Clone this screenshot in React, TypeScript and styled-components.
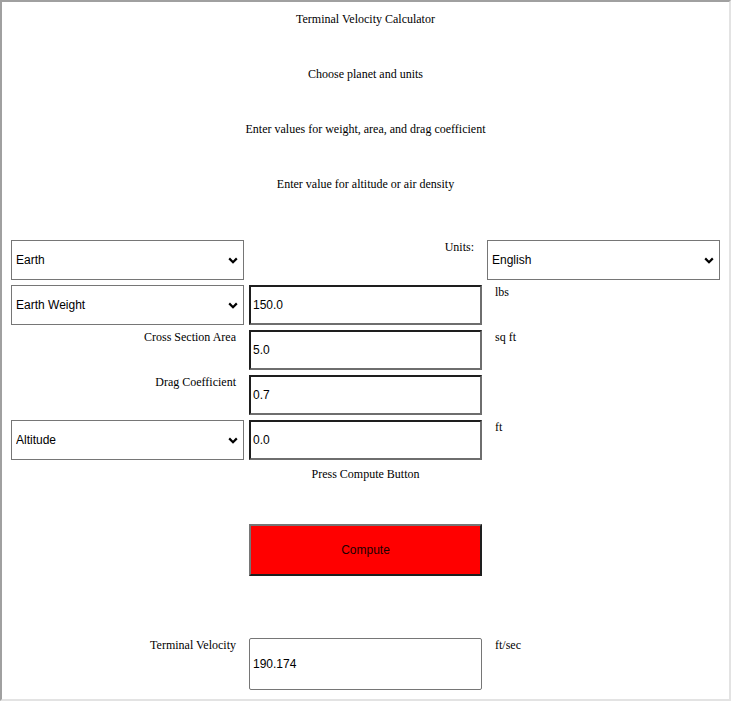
import React from "react";
import styled, { createGlobalStyle } from "styled-components";

const Global = createGlobalStyle`
  html, body { margin: 0; padding: 0; background: #fff; }
  body {
    font-family: "Liberation Serif", "Times New Roman", serif;
    font-size: 12px;
    color: #000;
  }
`;

const Frame = styled.div`
  width: 731px;
  height: 701px;
  box-sizing: border-box;
  border-style: solid;
  border-width: 2px;
  border-color: #a0a0a0 #e3e3e3 #e3e3e3 #a0a0a0;
  padding: 10px 9px 0;
`;

const Intro = styled.div`
  display: flex;
  flex-direction: column;
  margin-bottom: 8px;
`;

const IntroLine = styled.p`
  margin: 0;
  height: 55px;
  line-height: 14px;
  text-align: center;
`;

const Form = styled.div`
  display: grid;
  grid-template-columns: repeat(3, 233px);
  grid-template-rows: repeat(5, 40px) 54px 52px 52px 52px;
  column-gap: 5px;
  row-gap: 5px;
`;

const Label = styled.div<{ $align?: "left" | "right" | "center"; $top?: number }>`
  line-height: 14px;
  padding: ${(p) => p.$top ?? 0}px 8px 0;
  text-align: ${(p) => p.$align ?? "left"};
`;

const Empty = styled.div<{ $span?: number }>`
  grid-column: span ${(p) => p.$span ?? 1};
`;

const SelectWrap = styled.div`
  position: relative;
  height: 40px;
`;

const Select = styled.select`
  appearance: none;
  -webkit-appearance: none;
  width: 100%;
  height: 40px;
  box-sizing: border-box;
  border: 1px solid #767676;
  border-radius: 0;
  background: #fff;
  padding: 0 24px 0 4px;
  font-family: "Liberation Sans", Arial, sans-serif;
  font-size: 12px;
  color: #000;
  outline: none;
`;

const Chevron = styled.svg`
  position: absolute;
  right: 6px;
  top: 50%;
  margin-top: -3px;
  pointer-events: none;
`;

const Field = styled.input`
  width: 100%;
  height: 40px;
  box-sizing: border-box;
  border-style: solid;
  border-width: 2px;
  border-color: #1e1e1e #6e6e6e #6e6e6e #1e1e1e;
  border-radius: 0;
  padding: 0 2px;
  margin: 0;
  font-family: "Liberation Sans", Arial, sans-serif;
  font-size: 12px;
  color: #000;
  background: #fff;
  outline: none;
`;

const Output = styled.input`
  width: 100%;
  height: 52px;
  box-sizing: border-box;
  border: 1px solid #767676;
  border-radius: 2px;
  padding: 0 3px;
  margin: 0;
  font-family: "Liberation Sans", Arial, sans-serif;
  font-size: 12px;
  color: #000;
  background: #fff;
  outline: none;
`;

const ComputeButton = styled.button`
  width: 100%;
  height: 52px;
  box-sizing: border-box;
  margin: 0;
  padding: 0;
  background: #ff0000;
  border-style: solid;
  border-width: 2px;
  border-color: #767676 #1e1e1e #1e1e1e #767676;
  font-family: "Liberation Sans", Arial, sans-serif;
  font-size: 12px;
  color: #1a0000;
`;

function Dropdown({ value, options }: { value: string; options: string[] }) {
  return (
    <SelectWrap>
      <Select defaultValue={value}>
        {options.map((o) => (
          <option key={o}>{o}</option>
        ))}
      </Select>
      <Chevron width="10" height="7" viewBox="0 0 10 7">
        <path d="M1.2 1.4 L5 5.2 L8.8 1.4" fill="none" stroke="#000" strokeWidth="2.2" />
      </Chevron>
    </SelectWrap>
  );
}

export default function App() {
  return (
    <>
      <Global />
      <Frame>
        <Intro>
          <IntroLine>Terminal Velocity Calculator</IntroLine>
          <IntroLine>Choose planet and units</IntroLine>
          <IntroLine>Enter values for weight, area, and drag coefficient</IntroLine>
          <IntroLine>Enter value for altitude or air density</IntroLine>
        </Intro>
        <Form>
          <Dropdown value="Earth" options={["Earth", "Moon", "Mars", "Jupiter"]} />
          <Label $align="right">Units:</Label>
          <Dropdown value="English" options={["English", "Metric"]} />

          <Dropdown value="Earth Weight" options={["Earth Weight", "Mass"]} />
          <Field defaultValue="150.0" />
          <Label>lbs</Label>

          <Label $align="right">Cross Section Area</Label>
          <Field defaultValue="5.0" />
          <Label>sq ft</Label>

          <Label $align="right">Drag Coefficient</Label>
          <Field defaultValue="0.7" />
          <Empty />

          <Dropdown value="Altitude" options={["Altitude", "Air Density"]} />
          <Field defaultValue="0.0" />
          <Label>ft</Label>

          <Empty />
          <Label $align="center" $top={2}>Press Compute Button</Label>
          <Empty />

          <Empty />
          <ComputeButton>Compute</ComputeButton>
          <Empty />

          <Empty $span={3} />

          <Label $align="right">Terminal Velocity</Label>
          <Output readOnly defaultValue="190.174" />
          <Label>ft/sec</Label>
        </Form>
      </Frame>
    </>
  );
}
